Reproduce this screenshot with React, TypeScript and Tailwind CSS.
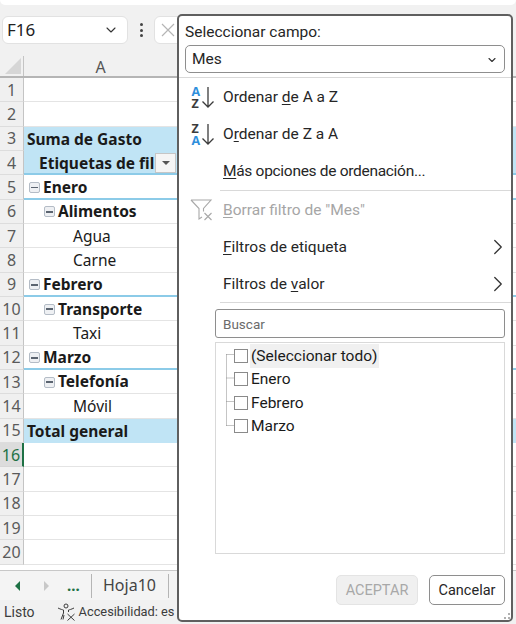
import { ChevronDown, ChevronRight } from 'lucide-react';

type Row = {
  n: number;
  text?: string;
  indent?: string;
  bold?: boolean;
  toggle?: boolean;
  fill?: boolean;
  line?: boolean;
};

const ROWS: Row[] = [
  { n: 1 },
  { n: 2 },
  { n: 3, text: 'Suma de Gasto', indent: 'pl-[3px]', bold: true, fill: true },
  { n: 4, text: 'Etiquetas de fil', indent: 'pl-[15px]', bold: true, fill: true, line: true },
  { n: 5, text: 'Enero', indent: 'pl-[5px]', bold: true, toggle: true, line: true },
  { n: 6, text: 'Alimentos', indent: 'pl-[20px]', bold: true, toggle: true },
  { n: 7, text: 'Agua', indent: 'pl-[49px]' },
  { n: 8, text: 'Carne', indent: 'pl-[49px]' },
  { n: 9, text: 'Febrero', indent: 'pl-[5px]', bold: true, toggle: true, line: true },
  { n: 10, text: 'Transporte', indent: 'pl-[20px]', bold: true, toggle: true },
  { n: 11, text: 'Taxi', indent: 'pl-[49px]' },
  { n: 12, text: 'Marzo', indent: 'pl-[5px]', bold: true, toggle: true, line: true },
  { n: 13, text: 'Telefonía', indent: 'pl-[20px]', bold: true, toggle: true },
  { n: 14, text: 'Móvil', indent: 'pl-[49px]' },
  { n: 15, text: 'Total general', indent: 'pl-[3px]', bold: true, fill: true },
  { n: 16 },
  { n: 17 },
  { n: 18 },
  { n: 19 },
  { n: 20 },
];

function Toggle() {
  return (
    <span className="mr-[3px] flex h-[11px] w-[11px] shrink-0 items-center justify-center rounded-[2px] border border-[#b4bcc6] bg-[#eef0f3]">
      <span className="h-[1.5px] w-[7px] bg-[#5b6470]" />
    </span>
  );
}

function SheetRow({ row }: { row: Row }) {
  const active = row.n === 16;
  return (
    <div className="flex h-[24.33px]">
      <div
        className={`flex w-[24px] shrink-0 items-center justify-center border-b border-r text-[16px] ${
          active
            ? 'border-b-[#d6d6d6] border-r-2 border-r-[#1e7145] bg-[#dcdcdc] text-[#1e7145]'
            : 'border-b-[#dddddd] border-r-[#c4c4c4] bg-[#f0f0f0] text-[#5a5a5a]'
        }`}
      >
        {row.n}
      </div>
      <div
        className={`relative flex min-w-0 flex-1 items-center text-[15.5px] text-[#1a1a1a] ${row.indent ?? ''} ${
          row.fill ? 'bg-[#c0e4f5]' : 'bg-white'
        } ${row.line ? 'border-b-2 border-b-[#8ccbe8] pt-[2px]' : row.fill ? 'pt-[1px]' : 'border-b border-b-[#e4e4e4] pt-[1px]'} ${
          row.bold ? 'font-bold' : ''
        }`}
      >
        {row.toggle && <Toggle />}
        <span className="whitespace-nowrap">{row.text}</span>
        {row.n === 4 && (
          <span className="absolute left-[131px] top-[2px] flex h-[20px] w-[21px] items-center justify-center border border-[#c6c6c6] bg-[#f5f5f5]">
            <span className="h-0 w-0 border-x-[4px] border-t-[4px] border-x-transparent border-t-[#555555]" />
          </span>
        )}
      </div>
    </div>
  );
}

function SortIcon({ top, bottom }: { top: string; bottom: string }) {
  return (
    <svg width="26" height="26" viewBox="0 0 26 26" className="shrink-0">
      <text x="1.5" y="12" fontSize="12.5" fontWeight="700" fontFamily="Open Sans, sans-serif" fill={top === 'A' ? '#2f8fdc' : '#3c3c3c'}>
        {top}
      </text>
      <text x="1.5" y="23.5" fontSize="12.5" fontWeight="700" fontFamily="Open Sans, sans-serif" fill={bottom === 'A' ? '#2f8fdc' : '#3c3c3c'}>
        {bottom}
      </text>
      <path d="M18 3v20M12.500 17.500l5.500 5.500 5.500-5.500" fill="none" stroke="#3c3c3c" strokeWidth="1.300" />
    </svg>
  );
}

function ClearFilterIcon() {
  return (
    <svg width="24" height="22" viewBox="0 0 24 22" className="shrink-0" fill="none" stroke="#a8a8a8" strokeWidth="1.1">
      <path d="M1 1h20l-7.500 8.500v3M1 1l8 8.500V20l3-2" />
      <path d="M14.500 14l7 7M21.500 14l-7 7" />
    </svg>
  );
}

function AccessIcon() {
  return (
    <svg width="20" height="18" viewBox="0 0 20 18" fill="none" stroke="#3c3c3c" strokeWidth="1">
      <circle cx="9" cy="3" r="2" />
      <path d="M1 5c3 1.500 4 1.500 5.500 2v3L4 16.500M17 5c-3 1.500-4 1.500-5.500 2v2" />
      <path d="M7 12l-1 4.500M10.500 11l7 6.500M17.500 11l-7 6.500" />
    </svg>
  );
}

function MenuItem({ children, icon, arrow, muted }: { children: React.ReactNode; icon?: React.ReactNode; arrow?: boolean; muted?: boolean }) {
  return (
    <div className={`flex h-[37px] items-center text-[15.5px] ${muted ? 'text-[#a6a6a6]' : 'text-[#262626]'}`}>
      <div className="flex w-[44px] shrink-0 justify-start pl-[11px]">{icon}</div>
      <span className="flex-1 whitespace-nowrap pt-[2px]">{children}</span>
      {arrow && <ChevronRight size={26} strokeWidth={1.200} className="text-[#333333]" />}
    </div>
  );
}

function Check({ label, hover }: { label: string; hover?: boolean }) {
  return (
    <div className="flex h-[23.500px] items-center">
      <span className="ml-[18px] h-[14px] w-[14px] shrink-0 border border-[#8a8a8a] bg-white" />
      <span className={`ml-[2px] px-[1px] pt-[1px] text-[15.5px] leading-[23px] text-[#1a1a1a] ${hover ? 'bg-[#f0f0f0] pr-[2px]' : ''}`}>{label}</span>
    </div>
  );
}

export default function App() {
  return (
    <div className="relative flex h-[624px] w-[516px] flex-col overflow-hidden bg-[#f1f1f1] font-['Noto_Sans',sans-serif]">
      <div className="h-[5px] rounded-b-lg bg-white" />

      {/* formula bar */}
      <div className="flex h-[51px] items-start pl-[2px] pt-[11px]">
        <div className="flex h-[28px] w-[126px] items-center justify-between rounded-md border border-[#e2e2e2] bg-white pl-[4px] pr-[8px] text-[17px] text-[#222222]">
          F16
          <ChevronDown size={16} strokeWidth={1.6} className="text-[#333333]" />
        </div>
        <div className="ml-[9px] flex h-[28px] w-[8px] flex-col items-center justify-center gap-[2.500px]">
          <span className="h-[3px] w-[3px] rounded-full bg-[#444444]" />
          <span className="h-[3px] w-[3px] rounded-full bg-[#444444]" />
          <span className="h-[3px] w-[3px] rounded-full bg-[#444444]" />
        </div>
        <div className="ml-[9px] flex h-[28px] w-[40px] items-center rounded-md border border-[#e2e2e2] bg-white pl-[6px]">
          <svg width="14" height="14" viewBox="0 0 14 14" stroke="#b5b5b5" strokeWidth="1.2">
            <path d="M1 1l12 12M13 1L1 13" />
          </svg>
        </div>
      </div>

      {/* column header */}
      <div className="flex h-[22px] border-b-2 border-b-[#b5b5b5]">
        <div className="flex w-[24px] shrink-0 items-end justify-end border-r border-r-[#c4c4c4] p-[2px]">
          <span className="h-0 w-0 border-b-[16px] border-l-[16px] border-b-[#d6d6d6] border-l-transparent" />
        </div>
        <div className="w-[153px] text-center text-[16px] leading-[22px] text-[#555555]">A</div>
      </div>

      {/* sheet */}
      <div className="flex-1 overflow-hidden bg-white">
        {ROWS.map((row) => (
          <SheetRow key={row.n} row={row} />
        ))}
      </div>

      {/* sheet tabs */}
      <div className="flex h-[30px] items-center border-t border-t-[#c8c8c8] bg-[#f4f4f4]">
        <span className="ml-[15px] h-0 w-0 border-y-[5px] border-r-[5px] border-y-transparent border-r-[#1e7145]" />
        <span className="ml-[24px] h-0 w-0 border-y-[5px] border-l-[5px] border-y-transparent border-l-[#c8c8c8]" />
        <span className="ml-[18px] w-[22px] text-[15px] font-bold leading-[15px] text-[#1e7145]">...</span>
        <span className="ml-[2px] h-[24px] border-l border-l-[#b5b5b5] pl-[11px] pr-[12px] text-[16px] leading-[22px] text-[#444444]">Hoja10</span>
        <span className="h-[24px] border-l border-l-[#b5b5b5]" />
      </div>

      {/* status bar */}
      <div className="flex h-[24px] items-center bg-[#f1f1f1] pl-[4px] font-['Roboto',sans-serif] text-[14px] text-[#3c3c3c]">
        <span>Listo</span>
        <span className="ml-[22px] flex items-center gap-[2px] whitespace-nowrap text-[12.8px]">
          <AccessIcon />
          Accesibilidad: es
        </span>
      </div>

      {/* filter popup */}
      <div className="absolute left-[177px] top-[14px] flex h-[608px] w-[336px] flex-col rounded-[5px] border-2 border-[#5f5f5f] bg-white font-['Roboto',sans-serif]">
        <div className="pl-[6px] pt-[5px] text-[15.5px] leading-[22px] text-[#262626]">Seleccionar campo:</div>
        <div className="mx-[6px] mt-[2px] flex h-[28px] items-center justify-between rounded-[5px] border border-[#8e8e8e] pl-[6px] pr-[6px] pt-[1px] text-[15.5px] text-[#262626]">
          Mes
          <ChevronDown size={12} strokeWidth={2.2} className="text-[#333333]" />
        </div>
        <div className="mt-[4px] border-b border-b-[#d9d9d9]" />

        <div>
          <MenuItem icon={<SortIcon top="A" bottom="Z" />}>
            Ordenar <u className="underline-offset-2">d</u>e A a Z
          </MenuItem>
          <MenuItem icon={<SortIcon top="Z" bottom="A" />}>
            O<u className="underline-offset-2">r</u>denar de Z a A
          </MenuItem>
          <MenuItem>
            <span className="tracking-[-0.3px]">
              <u className="underline-offset-2">M</u>ás opciones de ordenación...
            </span>
          </MenuItem>
        </div>
        <div className="ml-[41px] mt-[1px] border-b border-b-[#d9d9d9]" />
        <MenuItem muted icon={<ClearFilterIcon />}>
          <u className="underline-offset-2">B</u>orrar filtro de "Mes"
        </MenuItem>
        <MenuItem arrow>
          <u className="underline-offset-2">F</u>iltros de etiqueta
        </MenuItem>
        <MenuItem arrow>
          Filtros de <u className="underline-offset-2">v</u>alor
        </MenuItem>
        <div className="ml-[41px] border-b border-b-[#d9d9d9]" />

        <div className="mx-[6px] ml-[36px] mt-[6px] flex h-[29px] items-center rounded-[3px] border border-[#8e8e8e] pl-[7px] pt-[1px] text-[13.5px] text-[#6b6b6b]">
          Buscar
        </div>
        <div className="relative ml-[36px] mr-[6px] mt-[4px] h-[212px] border border-[#d9d9d9] pt-[1px]">
          <svg width="12" height="76" viewBox="0 0 12 76" className="absolute left-[9px] top-[10px]" fill="none" stroke="#8a8a8a" strokeDasharray="1 1">
            <path d="M1.500 1.500V72.500M1.500 1.500H9M1.500 25H9M1.500 48.500H9M1.500 72.500H9" />
          </svg>
          <div className="relative">
            <Check label="(Seleccionar todo)" hover />
            <Check label="Enero" />
            <Check label="Febrero" />
            <Check label="Marzo" />
          </div>
        </div>

        <div className="mr-[6px] mt-[21px] flex justify-end gap-[11px]">
          <div className="flex h-[30px] w-[82px] items-center justify-center rounded-[5px] border border-[#e4e4e4] bg-[#f0f0f0] pt-[1px] text-[14.5px] text-[#a8a8a8]">ACEPTAR</div>
          <div className="flex h-[30px] w-[76px] items-center justify-center rounded-[5px] border border-[#8e8e8e] bg-white pt-[1px] text-[14.5px] text-[#262626]">Cancelar</div>
        </div>

        <div className="absolute bottom-[1px] right-[1px] grid grid-cols-2 gap-[2px]">
          <span />
          <span className="h-[2px] w-[2px] bg-[#b0b0b0]" />
          <span className="h-[2px] w-[2px] bg-[#b0b0b0]" />
          <span className="h-[2px] w-[2px] bg-[#b0b0b0]" />
        </div>
      </div>
    </div>
  );
}
